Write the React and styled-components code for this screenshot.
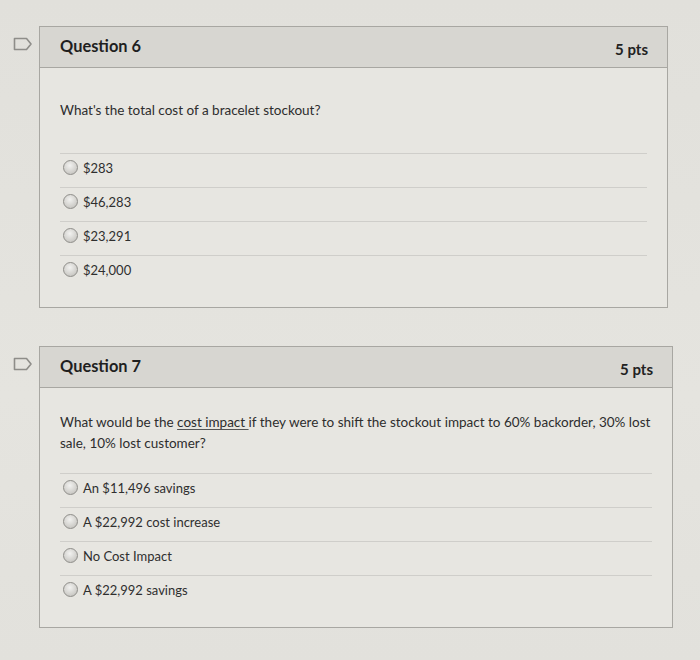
import React from 'react';
import styled, { createGlobalStyle } from 'styled-components';

const GlobalStyle = createGlobalStyle`
  html, body {
    margin: 0;
    background: #e3e2dd;
  }
  body {
    font-family: Lato, "Open Sans", sans-serif;
    color: #2b2b2b;
  }
`;

const Page = styled.div`
  width: 700px;
  height: 660px;
  padding-top: 26px;
  box-sizing: border-box;
  display: flex;
  flex-direction: column;
  gap: 38px;
  background: linear-gradient(180deg, #e1e0db 0%, #e5e4df 60%, #e2e1dc 100%);
`;

const Row = styled.div`
  display: flex;
  align-items: flex-start;
`;

const FlagCol = styled.div`
  width: 39px;
  flex: none;
  display: flex;
  padding: 11px 0 0 13px;
  box-sizing: border-box;
`;

const Card = styled.div`
  width: ${p => p.$w}px;
  border: 1px solid #a8a7a2;
  background: #e7e6e1;
`;

const Header = styled.div`
  height: 40px;
  display: flex;
  align-items: center;
  justify-content: space-between;
  padding: 0 19px 0 20px;
  background: #d7d6d1;
  border-bottom: 1px solid #a8a7a2;
`;

const Title = styled.div`
  font-size: 16.4px;
  font-weight: 700;
  color: #1f1f1f;
  padding-bottom: 3px;
`;

const Points = styled.div`
  font-size: 15px;
  font-weight: 700;
  color: #222;
  padding-top: 3px;
`;

const Body = styled.div`
  padding: ${p => p.$top}px 20px 18px;
`;

const Prompt = styled.div`
  font-size: 13.5px;
  line-height: 21px;
  color: #2d2d2d;
  padding-bottom: ${p => p.$bottom}px;

  u {
    text-decoration-color: #555;
    text-underline-offset: 2px;
  }
`;

const Options = styled.div`
  display: flex;
  flex-direction: column;
`;

const Option = styled.label`
  height: 34px;
  display: flex;
  align-items: center;
  gap: 5px;
  padding-left: 3px;
  padding-bottom: 6px;
  box-sizing: border-box;
  border-top: 1px solid #cfceca;
  font-size: 13px;
  color: #2f2f2f;
`;

const Radio = styled.span`
  width: 13px;
  height: 13px;
  border-radius: 50%;
  border: 1px solid #8f8e8a;
  background: radial-gradient(circle at 45% 35%, #f2f2f0 0%, #d2d1cd 60%, #b9b8b4 100%);
  flex: none;
`;

const Flag = () => (
  <svg width="20" height="14" viewBox="0 0 20 14">
    <path
      d="M1.5 1.5 H13.5 L18 7 L13.5 12.5 H1.5 Z"
      fill="none"
      stroke="#8e8d89"
      strokeWidth="1.6"
      strokeLinejoin="round"
    />
  </svg>
);

const Question = ({ title, prompt, options, width, top, gap }) => (
  <Row>
    <FlagCol>
      <Flag />
    </FlagCol>
    <Card $w={width}>
      <Header>
        <Title>{title}</Title>
        <Points>5 pts</Points>
      </Header>
      <Body $top={top}>
        <Prompt $bottom={gap}>{prompt}</Prompt>
        <Options>
          {options.map(o => (
            <Option key={o}>
              <Radio />
              {o}
            </Option>
          ))}
        </Options>
      </Body>
    </Card>
  </Row>
);

export default function App() {
  return (
    <>
      <GlobalStyle />
      <Page>
        <Question
          title="Question 6"
          width={627}
          top={32}
          gap={32}
          prompt="What's the total cost of a bracelet stockout?"
          options={['$283', '$46,283', '$23,291', '$24,000']}
        />
        <Question
          title="Question 7"
          width={632}
          top={24}
          gap={19}
          prompt={
            <>
              What would be the <u>cost impact </u>if they were to shift the stockout impact to 60% backorder, 30% lost sale, 10% lost customer?
            </>
          }
          options={['An $11,496 savings', 'A $22,992 cost increase', 'No Cost Impact', 'A $22,992 savings']}
        />
      </Page>
    </>
  );
}
